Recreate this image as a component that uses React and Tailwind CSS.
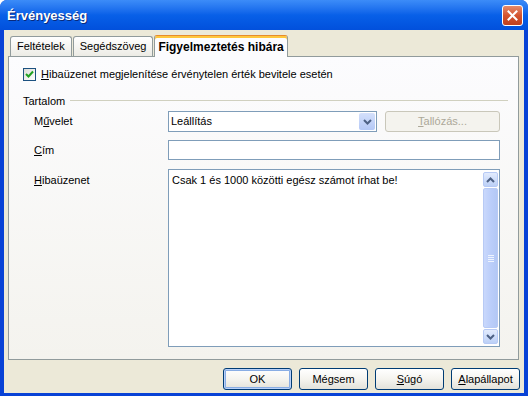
import React from 'react'

const font = { fontFamily: '"Liberation Sans", Tahoma, sans-serif' }

function XpButton({ children, primary, className = '' }) {
  return (
    <button
      className={`h-[22px] w-[69px] rounded-[3px] border border-[#003C74] bg-gradient-to-b from-white via-[#F5F4EF] to-[#E3E2DA] text-[11px] text-black ${
        primary ? 'shadow-[inset_0_0_0_1px_#B9D1F9,inset_0_0_0_2px_#89ADE4]' : ''
      } ${className}`}
    >
      {children}
    </button>
  )
}

function Tab({ children, active }) {
  if (active) {
    return (
      <div className="relative z-10 -mb-px flex h-[22px] items-center rounded-t-[3px] border border-b-0 border-[#919B9C] border-t-[#E68B2C] bg-[#FCFCFE] px-[3px] pt-[1px] text-[12px] font-bold shadow-[inset_0_2px_0_#FFC73C]">
        {children}
      </div>
    )
  }
  return (
    <div className="mt-[2px] flex h-[20px] items-center rounded-t-[3px] border border-b-0 border-[#919B9C] bg-gradient-to-b from-white to-[#ECEBE5] px-[6px] text-[11px]">
      {children}
    </div>
  )
}

function ChevronDown() {
  return (
    <svg width="9" height="6" viewBox="0 0 9 6">
      <path d="M1 1 L4.5 4.5 L8 1" fill="none" stroke="#4D6185" strokeWidth="2" />
    </svg>
  )
}

function ChevronUp() {
  return (
    <svg width="9" height="6" viewBox="0 0 9 6">
      <path d="M1 5 L4.5 1.5 L8 5" fill="none" stroke="#4D6185" strokeWidth="2" />
    </svg>
  )
}

export default function App() {
  return (
    <div className="flex h-[396px] w-[528px] flex-col overflow-hidden rounded-t-[7px] bg-[#0842D6] text-black" style={font}>
      {/* title bar */}
      <div className="flex h-[30px] shrink-0 items-center justify-between bg-gradient-to-b from-[#3C8CF8] via-[#0860E8] to-[#0250DC] pl-[7px] pr-[5px]">
        <span className="pt-[2px] text-[13px] font-bold text-white [text-shadow:1px_1px_0_#0A2A7A]">
          Érvényesség
        </span>
        <div className="flex h-[21px] w-[21px] items-center justify-center rounded-[3px] border border-white bg-gradient-to-b from-[#E58A6A] via-[#D4542F] to-[#C0401E]">
          <svg width="11" height="11" viewBox="0 0 11 11">
            <path d="M1.5 1.5 L9.5 9.5 M9.5 1.5 L1.5 9.5" stroke="white" strokeWidth="2" strokeLinecap="square" />
          </svg>
        </div>
      </div>

      {/* body */}
      <div className="mx-[4px] mb-[3px] flex flex-1 flex-col bg-[#ECE9D8] pl-[4px] pr-[4px] pt-[4px]">
        <div className="flex items-end gap-[1px] pl-[2px]">
          <Tab>Feltételek</Tab>
          <Tab>Segédszöveg</Tab>
          <Tab active>Figyelmeztetés hibára</Tab>
        </div>

        {/* tab panel */}
        <div className="flex h-[304px] w-[511px] flex-col border border-[#919B9C] bg-gradient-to-b from-[#FCFCFE] to-[#F4F3EE] pl-[14px] pr-[10px] pt-[9px] text-[11px]">
          <label className="flex items-center gap-[3px]">
            <span className="flex h-[13px] w-[13px] items-center justify-center border border-[#1C5180] bg-gradient-to-br from-[#DCDCD7] to-white">
              <svg width="9" height="9" viewBox="0 0 9 9">
                <path d="M1 4 L3.5 6.5 L8 1.5" fill="none" stroke="#21A121" strokeWidth="2" />
              </svg>
            </span>
            <span className="ml-[2px]">
              <u>H</u>ibaüzenet megjelenítése érvénytelen érték bevitele esetén
            </span>
          </label>

          <div className="mt-[10px] flex items-center gap-[5px]">
            <span>Tartalom</span>
            <div className="h-px flex-1 bg-[#D0D0BF]" />
          </div>

          <div className="mt-[2px] grid grid-cols-[134px_1fr] pl-[11px]">
            <span className="self-center">
              M<u>ű</u>velet
            </span>
            <div className="flex items-center gap-[8px]">
              <div className="flex h-[21px] w-[209px] items-center justify-between border border-[#7F9DB9] bg-white pl-[2px] pr-[1px]">
                <span>Leállítás</span>
                <span className="flex h-[17px] w-[16px] items-center justify-center rounded-[2px] bg-gradient-to-b from-[#D4E0FB] to-[#B4C8F6]">
                  <ChevronDown />
                </span>
              </div>
              <div className="flex h-[21px] w-[115px] items-center justify-center rounded-[3px] border border-[#C9C7BA] bg-[#F4F3EE] text-[#ACA899]">
                <span>
                  <u>T</u>allózás...
                </span>
              </div>
            </div>

            <span className="mt-[8px] self-center">
              <u>C</u>ím
            </span>
            <div className="mt-[8px] h-[20px] w-[332px] border border-[#7F9DB9] bg-white" />

            <span className="mt-[12px]">
              <u>H</u>ibaüzenet
            </span>
            <div className="mt-[9px] flex h-[178px] w-[332px] border border-[#7F9DB9] bg-white">
              <div className="flex-1 pl-[3px] pt-[2px]">Csak 1 és 1000 közötti egész számot írhat be!</div>
              <div className="my-[2px] mr-[1px] flex w-[15px] flex-col gap-[1px]">
                <div className="flex h-[15px] items-center justify-center rounded-[2px] border border-[#B7CAF5] bg-gradient-to-b from-[#E2EBFD] to-[#BCD0F7]">
                  <ChevronUp />
                </div>
                <div className="flex flex-1 items-center justify-center rounded-[2px] border border-[#B7CAF5] bg-gradient-to-r from-[#C9D8FC] via-[#BBCEFA] to-[#B3C8F5]">
                  <div className="flex flex-col gap-[1px]">
                    <div className="h-px w-[6px] bg-[#EEF4FE]" />
                    <div className="h-px w-[6px] bg-[#EEF4FE]" />
                    <div className="h-px w-[6px] bg-[#EEF4FE]" />
                    <div className="h-px w-[6px] bg-[#EEF4FE]" />
                  </div>
                </div>
                <div className="flex h-[15px] items-center justify-center rounded-[2px] border border-[#B7CAF5] bg-gradient-to-b from-[#E2EBFD] to-[#BCD0F7]">
                  <ChevronDown />
                </div>
              </div>
            </div>
          </div>
        </div>

        {/* buttons */}
        <div className="mt-[8px] flex justify-end gap-[7px]">
          <XpButton primary>OK</XpButton>
          <XpButton>Mégsem</XpButton>
          <XpButton>
            <u>S</u>úgó
          </XpButton>
          <XpButton>
            <u>A</u>lapállapot
          </XpButton>
        </div>
      </div>
    </div>
  )
}
